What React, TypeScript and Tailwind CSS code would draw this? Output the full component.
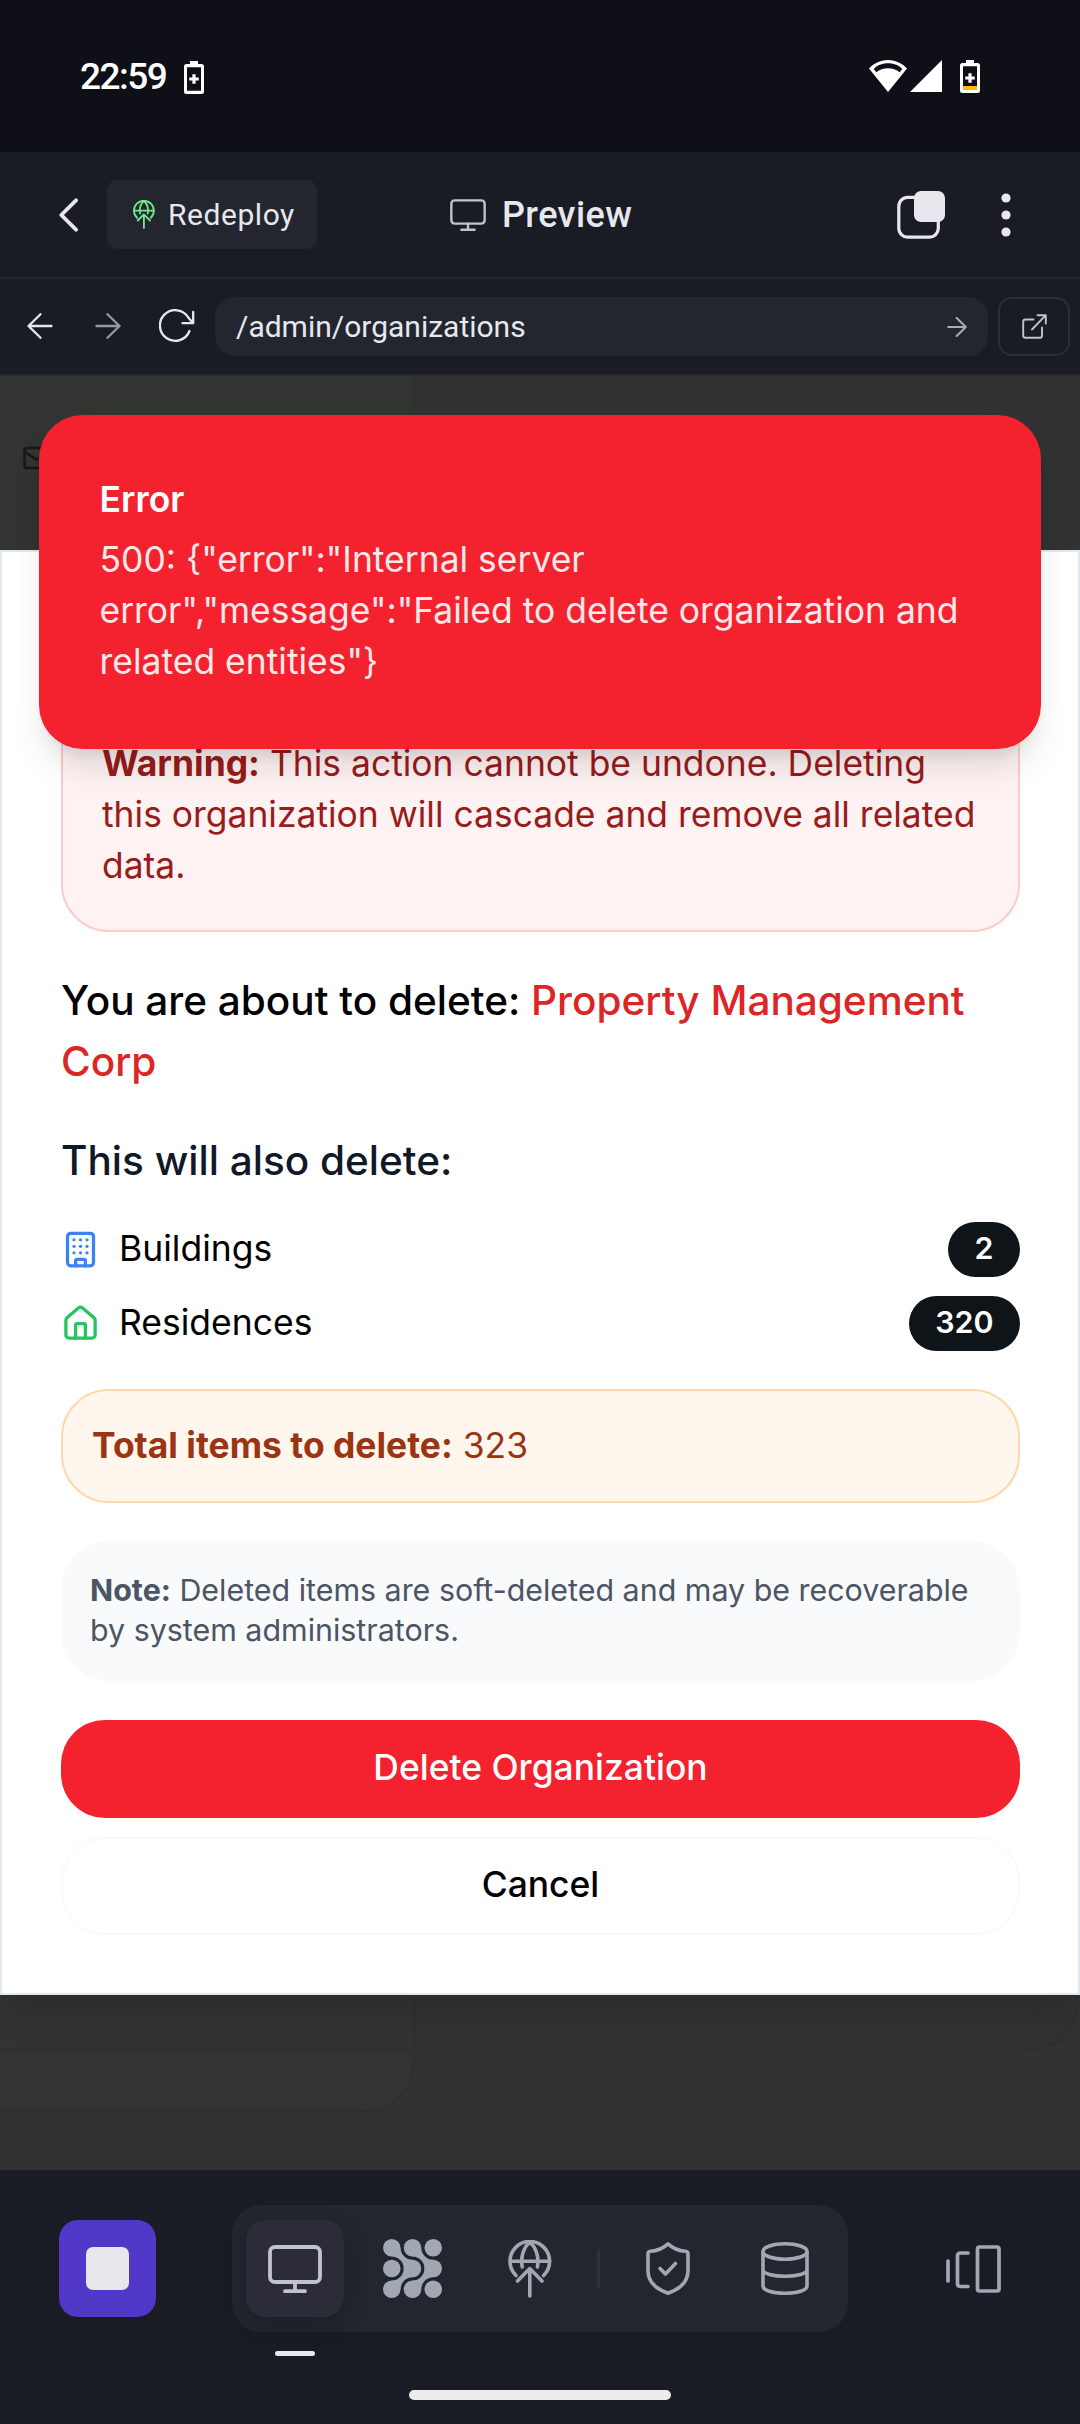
import type { ReactNode } from "react";
import { Building, House, Mail } from "lucide-react";

function DeployGlobe({ className }: { className: string }) {
  return (
    <svg viewBox="0 0 44 58" fill="none" stroke="currentColor" strokeWidth="3.6" strokeLinecap="round" strokeLinejoin="round" className={className}>
      <path d="M8 35.5A19.8 19.8 0 1 1 35.6 35.5" />
      <path d="M2.2 21.3H41.4" />
      <path d="M14.2 27C12.4 17 15.5 7.5 21.8 2C28.1 7.5 31.2 17 29.4 27" />
      <path d="M21.8 56V29M9.5 41L21.8 28.6L34 41" />
    </svg>
  );
}

function MonitorIcon({ className, stroke }: { className: string; stroke: number }) {
  return (
    <svg viewBox="0 0 54 48" fill="none" stroke="currentColor" strokeWidth={stroke} strokeLinecap="round" className={className}>
      <rect x="2" y="2" width="50" height="35" rx="5" />
      <path d="M27 37V46M17 46.2H37" />
    </svg>
  );
}

function AgentDots({ className }: { className: string }) {
  const c = [8.7, 29.3, 49.9];
  return (
    <svg viewBox="0 0 58.6 58.6" fill="currentColor" className={className}>
      {c.map((x) => c.map((y) => <circle key={`${x}-${y}`} cx={x} cy={y} r="8.7" />))}
      <path d="M17.4 8.7A11.9 11.9 0 0 0 29.3 20.6L33 29.3L29.3 38A11.9 11.9 0 0 0 17.4 49.9L8.7 49.9L8.7 41.2A11.9 11.9 0 0 0 20.6 29.3A11.9 11.9 0 0 0 8.7 17.4L8.7 8.7Z" />
      <path d="M38 8.7A11.9 11.9 0 0 0 49.9 20.6L53 29.3L49.9 38A11.9 11.9 0 0 0 38 49.9L29.3 49.9L29.3 41.2A11.9 11.9 0 0 0 41.2 29.3A11.9 11.9 0 0 0 29.3 17.4L29.3 8.7Z" />
    </svg>
  );
}

function Battery({ charge }: { charge?: boolean }) {
  return (
    <svg viewBox="0 0 20 33" className="h-[33px] w-5">
      <path fill="#fff" fillRule="evenodd" d="M6 0H14V3H17.5A2.5 2.5 0 0 1 20 5.5V30.5A2.5 2.5 0 0 1 17.5 33H2.5A2.5 2.5 0 0 1 0 30.5V5.5A2.5 2.5 0 0 1 2.5 3H6ZM3 6.2V29.8H17V6.2Z" />
      {charge && <rect x="3" y="26" width="14" height="4" fill="#fbbc04" />}
      <path fill="#fff" d="M8.4 13.2H11.6V16.4H14.8V19.6H11.6V22.8H8.4V19.6H5.2V16.4H8.4Z" />
    </svg>
  );
}

function StatusBar() {
  return (
    <div className="flex h-[152px] items-start bg-[#0e0f17] pr-[100px] pl-20 pt-[60px]">
      <span className="h-8 text-[37px] leading-[33px] font-medium tracking-[-1.5px] text-white">22:59</span>
      <div className="ml-[18px] pt-px"><Battery /></div>
      <svg viewBox="0 0 38 32" className="ml-auto h-8 w-[38px]" fill="#fff">
        <path fillRule="evenodd" d="M19 0C27 0 33.500 3.500 38 8.600L19 32L0 8.600C4.500 3.500 11 0 19 0ZM19 3.200C13 3.200 8 5.400 4.700 8.900L7.400 12.200C10.600 9.600 14.500 8.200 19 8.200S27.400 9.600 30.600 12.200L33.300 8.900C30 5.400 25 3.200 19 3.200Z" />
      </svg>
      <svg viewBox="0 0 32 32" className="ml-[3px] h-8 w-8" fill="#fff">
        <path d="M32 0V32H0Z" />
      </svg>
      <div className="ml-[18px]"><Battery charge /></div>
    </div>
  );
}

function Header() {
  return (
    <header className="flex h-[127px] items-center border-b-2 border-[#242630] bg-[#1a1c25] text-[#e6e8ee]">
      <svg viewBox="0 0 20 34" fill="none" stroke="currentColor" strokeWidth="3.800" strokeLinecap="round" strokeLinejoin="round" className="ml-[59px] h-[34px] w-5">
        <path d="M17 2.300L2.300 17L17 31.700" />
      </svg>
      <button className="ml-7 flex h-[69px] w-[210px] items-center rounded-[10px] bg-[#23262f] pl-[26px]">
        <DeployGlobe className="h-[29px] w-[22px] text-[#72e88a]" />
        <span className="ml-[13px] text-[30px] tracking-[0.55px]">Redeploy</span>
      </button>
      <MonitorIcon stroke={3.6} className="ml-[133px] h-[34px] w-9 text-[#c0c3cf]" />
      <h1 className="ml-[16px] w-[380px] text-[36px] font-medium tracking-[0.4px]">Preview</h1>
      <svg viewBox="0 0 48 49" className="ml-[15px] h-[49px] w-12" fill="none">
        <rect x="1.800" y="7.300" width="39.500" height="39.900" rx="9" stroke="currentColor" strokeWidth="3.200" />
        <rect x="17" y="1" width="31" height="31" rx="7" fill="currentColor" />
      </svg>
      <svg viewBox="0 0 10 44" className="ml-[56px] h-11 w-[10px]" fill="currentColor">
        <circle cx="5" cy="5" r="4.600" />
        <circle cx="5" cy="22" r="4.600" />
        <circle cx="5" cy="39" r="4.600" />
      </svg>
    </header>
  );
}

function Arrow({ className, flip, stroke }: { className: string; flip?: boolean; stroke: number }) {
  return (
    <svg viewBox="0 0 26 26" fill="none" stroke="currentColor" strokeWidth={stroke} strokeLinecap="round" strokeLinejoin="round" className={className}>
      <path d={flip ? "M24.500 13H1.500M13.500 1.200L1.500 13L13.500 24.800" : "M1.500 13H24.500M12.500 1.200L24.500 13L12.500 24.800"} />
    </svg>
  );
}

function AddressBar() {
  return (
    <div className="flex h-[97px] items-center border-b-2 border-[#262834] bg-[#1a1c25] pl-[27px] text-[#e6e8ee]">
      <Arrow flip stroke={2.3} className="mb-px h-[26px] w-[26px]" />
      <Arrow stroke={2.3} className="mb-px ml-[42px] h-[26px] w-[26px] text-[#9396a5]" />
      <svg viewBox="0 0 36 33" fill="none" stroke="currentColor" strokeWidth="2.300" strokeLinecap="round" strokeLinejoin="round" className="mb-[2px] ml-[38px] h-[33px] w-9">
        <path d="M30.500 22A15.300 15.300 0 1 1 29.300 8.500L34 14M34.200 3V14.200H23.500" />
      </svg>
      <div className="ml-5 flex h-[59px] w-[773px] items-center rounded-[20px] bg-[#23262f] pr-[21px] pl-[21px]">
        <span className="mb-px text-[30px]">/admin/organizations</span>
        <Arrow stroke={2.6} className="ml-auto h-5 w-5 text-[#aaadb8]" />
      </div>
      <button className="ml-[10px] flex h-[59px] w-[72px] items-center justify-center rounded-[14px] border-2 border-[#2b2d39]">
        <svg viewBox="0 0 25 25" fill="none" stroke="currentColor" strokeWidth="1.900" strokeLinecap="round" strokeLinejoin="round" className="h-[25px] w-[25px] text-[#c0c3cf]">
          <path d="M11.500 5.500H3.500Q1.200 5.500 1.200 7.800V21.500Q1.200 23.800 3.500 23.800H18Q20 23.800 20 21.500V13.500M15.500 1.200H23.800V9.500M23.800 1.200L10 15.500" />
        </svg>
      </button>
    </div>
  );
}

function EntityRow({ icon, name, count }: { icon: ReactNode; name: string; count: number }) {
  return (
    <div className="flex h-[55px] items-center">
      {icon}
      <span className="mb-[3px] ml-[19px] text-[35.500px] leading-[51px] text-black">{name}</span>
      <span className="ml-auto flex h-[55px] items-center rounded-full bg-[#0f1419] px-[26.500px] pb-[2px] text-[30.400px] font-semibold text-white">{count}</span>
    </div>
  );
}

function DeleteDialog() {
  return (
    <section className="relative mt-[174px] flex h-[1445px] flex-col border-2 border-[#dfe9ee] bg-white pr-[58px] pl-[59px] pt-[143px] shadow-[0_24px_36px_-8px_rgba(0,0,0,0.15)]">
      <div className="h-[237px] shrink-0 rounded-[48px] border-2 border-[#fecaca] bg-[#fef2f2] pt-[41px] pl-[39px] text-[35.450px] leading-[51px] text-[#991b1b]">
        <p>
          <strong className="font-bold">Warning:</strong> This action cannot be undone. Deleting<br />
          this organization will cascade and remove all related<br />
          data.
        </p>
      </div>
      <p className="mt-[38px] text-[40.520px] leading-[61px] font-medium text-black">
        You are about to delete: <span className="text-[#dc2626]">Property Management<br />Corp</span>
      </p>
      <h2 className="mt-[38px] text-[40.520px] leading-[61px] font-medium text-[#111827]">This will also delete:</h2>
      <div className="mt-[31px] flex flex-col gap-[19px]">
        <EntityRow icon={<Building className="size-[39px] text-[#3b82f6]" />} name="Buildings" count={2} />
        <EntityRow icon={<House className="size-[39px] text-[#22c55e]" />} name="Residences" count={320} />
      </div>
      <div className="mt-[38px] flex h-[114px] shrink-0 items-center rounded-[48px] border-2 border-[#fed7aa] bg-[#fff7ed] pl-[29px] text-[35.450px] text-[#9a3412]">
        <p><strong className="font-bold">Total items to delete:</strong> 323</p>
      </div>
      <div className="mt-[38px] h-[140px] shrink-0 rounded-[48px] bg-[#f9fafc] pt-[29px] pl-[29px] text-[30.400px] leading-10 text-[#4b5563]">
        <p><strong className="font-bold">Note:</strong> Deleted items are soft-deleted and may be recoverable<br />by system administrators.</p>
      </div>
      <button className="mt-[39px] h-[98px] shrink-0 rounded-[44px] bg-[#f4212e] pb-[2px] text-[35.450px] font-medium text-white">Delete Organization</button>
      <button className="mt-[19px] h-[98px] shrink-0 rounded-[44px] border-2 border-[#f9fafa] bg-white pb-[2px] text-[35.450px] font-medium text-black">Cancel</button>
    </section>
  );
}

function ErrorToast() {
  return (
    <div role="alert" className="absolute top-[39px] left-[39px] h-[334px] w-[1002px] rounded-[44px] bg-[#f4212e] pt-[60px] pl-[60.500px] text-[35.480px] leading-[50.700px] text-white shadow-[0_24px_37px_-7px_rgba(0,0,0,0.12),0_10px_15px_-8px_rgba(0,0,0,0.1)]">
      <p className="font-semibold">Error</p>
      <p className="mt-[9.500px] text-white/90">
        {'500: {"error":"Internal server'}<br />
        {'error","message":"Failed to delete organization and'}<br />
        {'related entities"}'}
      </p>
    </div>
  );
}

function PreviewPane() {
  return (
    <main className="relative h-[1794px] overflow-hidden bg-[#323232] font-[Inter,sans-serif]">
      <div className="absolute top-[-60px] left-[-60px] h-[1796px] w-[474px] rounded-br-[48px] border-2 border-[#2e2f2f] bg-[#323432]" />
      <div className="absolute top-[1500px] left-[-60px] h-[175px] w-[1139px] rounded-br-[50px] border-2 border-[#2e2f2f]" />
      <Mail className="absolute top-[67px] left-[22px] size-[30px] text-[#15171a]" />
      <DeleteDialog />
      <ErrorToast />
    </main>
  );
}

function Dock() {
  return (
    <footer className="relative flex h-[254px] items-start bg-[#1a1c25] pt-[35px] text-[#a1a7b3]">
      <button className="mt-[15px] ml-[59px] flex h-[97px] w-[97px] items-center justify-center rounded-[19px] bg-[#5138c8]">
        <span className="h-[43px] w-[43px] rounded-[7px] bg-[#e6e8ee]" />
      </button>
      <nav className="ml-[76px] flex h-[127px] w-[616px] items-center rounded-[29px] bg-[#23262f] pl-[14px]">
        <div className="relative flex h-[97px] w-[98px] items-center justify-center rounded-[20px] bg-[#2b2c38] shadow-[0_8px_20px_rgba(20,20,32,0.45)]">
          <MonitorIcon stroke={3.8} className="h-12 w-[54px] text-[#c0c3cf]" />
          <span className="absolute top-[131px] left-[29px] h-[5px] w-10 rounded-full bg-[#e6e8ee]" />
        </div>
        <AgentDots className="ml-[39px] h-[59px] w-[59px]" />
        <DeployGlobe className="ml-[65.500px] h-[58px] w-11" />
        <span className="ml-[45.500px] h-[39px] w-[3px] bg-[#30313d]" />
        <svg viewBox="0 0 44 53" fill="none" stroke="currentColor" strokeWidth="3.600" strokeLinecap="round" strokeLinejoin="round" className="ml-[46px] h-[53px] w-11">
          <path d="M22 1.900C17 6.500 10.500 9 4.500 9.300Q2 9.500 2 12V29C2 39.500 9 46.500 22 51.200C35 46.500 42 39.500 42 29V12Q42 9.500 39.500 9.300C33.500 9 27 6.500 22 1.900Z" />
          <path d="M14 26.500L19.500 32L29.500 21.500" />
        </svg>
        <svg viewBox="0 0 48 53" fill="none" stroke="currentColor" strokeWidth="3.600" className="ml-[71px] h-[53px] w-12">
          <ellipse cx="24" cy="9.500" rx="22" ry="7.700" />
          <path d="M2 9.500V44C2 48.200 11.500 51.200 24 51.200S46 48.200 46 44V9.500M2 28C2 31.500 12 34.300 24 34.300S46 31.500 46 28" />
        </svg>
      </nav>
      <svg viewBox="0 0 56 48" fill="none" stroke="currentColor" strokeWidth="3.700" strokeLinecap="round" strokeLinejoin="round" className="mt-10 ml-[98px] h-12 w-14">
        <path d="M2 16V36M22 8H14.500Q11.500 8 11.500 11V38.500Q11.500 41.500 14.500 41.500H22" />
        <rect x="31.500" y="2" width="21.500" height="44" rx="2" />
      </svg>
      <div className="absolute bottom-6 left-[409px] h-[10px] w-[262px] rounded-full bg-[#ececec]" />
    </footer>
  );
}

export default function App() {
  return (
    <div className="h-[2424px] w-[1080px] overflow-hidden font-[Roboto,sans-serif]">
      <StatusBar />
      <Header />
      <AddressBar />
      <PreviewPane />
      <Dock />
    </div>
  );
}
